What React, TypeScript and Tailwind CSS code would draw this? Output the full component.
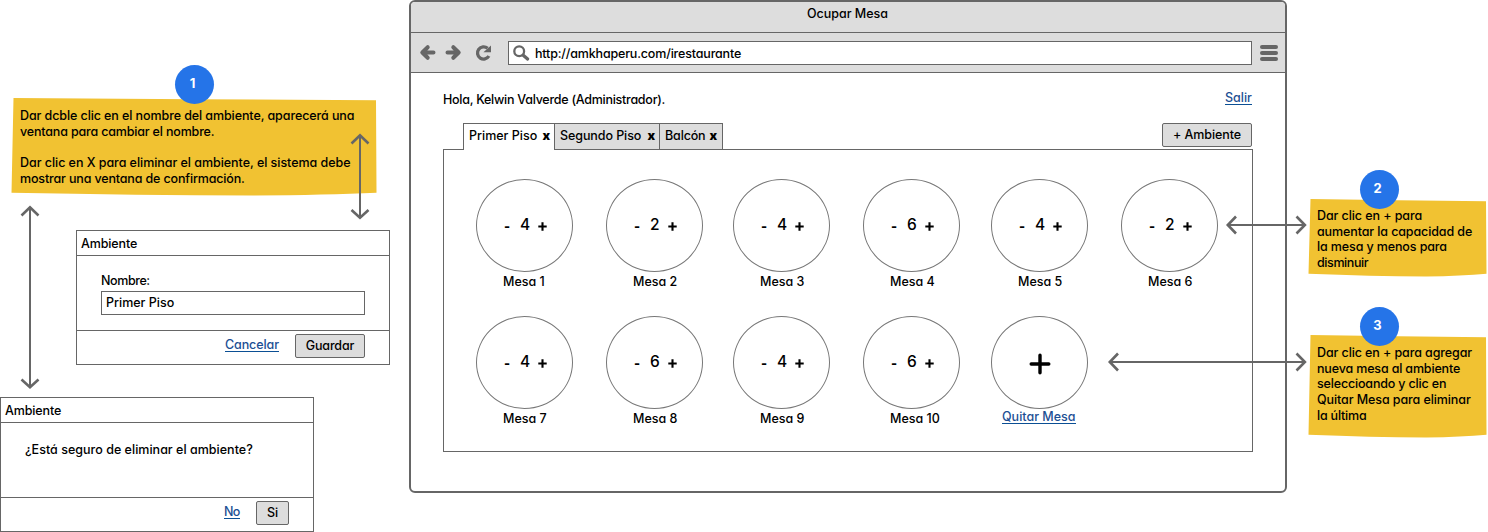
import type { ReactNode } from 'react';

type Table = { name: string; seats: number };

const tables: Table[] = [
  { name: 'Mesa 1', seats: 4 },
  { name: 'Mesa 2', seats: 2 },
  { name: 'Mesa 3', seats: 4 },
  { name: 'Mesa 4', seats: 6 },
  { name: 'Mesa 5', seats: 4 },
  { name: 'Mesa 6', seats: 2 },
  { name: 'Mesa 7', seats: 4 },
  { name: 'Mesa 8', seats: 6 },
  { name: 'Mesa 9', seats: 4 },
  { name: 'Mesa 10', seats: 6 },
];

function Link({ children, className }: { children: ReactNode; className: string }) {
  return (
    <a className={`block h-[15px] border-b border-[#0b4f94] leading-4 text-[#1c4f94] ${className}`}>{children}</a>
  );
}

function Button({ children, className }: { children: ReactNode; className: string }) {
  return (
    <button
      className={`flex h-6 justify-center rounded-[2px] border border-[#666] bg-[#ddd] pt-[3px] leading-4 ${className}`}
    >
      {children}
    </button>
  );
}

function Badge({ n, className }: { n: number; className: string }) {
  return (
    <div
      className={`absolute flex size-[39px] justify-center rounded-full bg-[#2574e8] pt-[10px] pr-1 text-[13px] font-bold leading-4 text-white ${className}`}
    >
      {n}
    </div>
  );
}

function Note({ w, h, className, children }: { w: number; h: number; className: string; children: ReactNode }) {
  return (
    <div className={`relative leading-[15.7px] ${className}`}>
      <svg className="absolute inset-0 size-full" viewBox={`0 0 ${w} ${h}`} preserveAspectRatio="none">
        <path
          d={`M2.5 0 L${w / 2} 1.2 L${w - 1} 2.3 L${w - 0.5} ${h - 3.3} Q${w * 0.86} ${h - 0.9} ${w * 0.66} ${h - 0.6} Q${w * 0.35} ${h - 0.8} 0.5 ${h - 3.3} Z`}
          fill="#f1c232"
        />
      </svg>
      {children}
    </div>
  );
}

function Dialog({ children, footer, className }: { children: ReactNode; footer: ReactNode; className: string }) {
  return (
    <div className={`flex h-[135px] w-[314px] flex-col border border-[#666] bg-white ${className}`}>
      <div className="h-[25px] border-b border-[#666] pt-[5px] pl-1 leading-4 tracking-[-0.12px]">Ambiente</div>
      <div className="h-[75px] border-b border-[#666] pl-6">{children}</div>
      <div className="flex justify-end gap-4 pt-[3px] pr-6">{footer}</div>
    </div>
  );
}

function Tab({ label, className }: { label: string; className: string }) {
  return (
    <div className={`flex border-t border-l border-[#666] pt-1 pl-[5px] leading-4 ${className}`}>
      <span>{label}</span>
      <span className="ml-auto font-black tracking-normal">x</span>
    </div>
  );
}

function Seat({ table }: { table: Table }) {
  return (
    <div className="h-[137px]">
      <div className="flex h-[93px] w-[97px] items-start rounded-[50%] border border-[#777] pt-[35px] pl-[27px] leading-5">
        <span className="mt-px w-4 text-[13px] font-extrabold">-</span>
        <span className="w-[17px] text-[15.5px]">{table.seats}</span>
        <svg className="mt-[7px] ml-px" width="9" height="9" viewBox="0 0 9 9" stroke="#000" strokeWidth="2.1">
          <path d="M4.5 0.3V8.7M0.3 4.5H8.7" />
        </svg>
      </div>
      <div className="mt-[2px] pl-[27px] leading-4">{table.name}</div>
    </div>
  );
}

function BrowserWindow() {
  return (
    <section className="flex h-[493px] w-[878px] flex-col overflow-hidden rounded-[6px] border-2 border-[#666] bg-white">
      <div className="flex h-[31px] justify-center border-b border-[#666] bg-[#ddd] pt-1 pr-px leading-4">
        Ocupar Mesa
      </div>
      <div className="flex h-10 items-center border-b border-[#666] bg-[#ddd] pl-2">
        <svg width="90" height="18" viewBox="0 0 90 18" fill="none" stroke="#666" strokeWidth="4" strokeLinecap="round" strokeLinejoin="round">
          <path d="M3.5 8.5H14.5M8.7 3.2L3.3 8.5L8.7 13.8" />
          <path d="M28.5 8.5H39.5M34.3 3.2L39.7 8.5L34.3 13.8" />
          <path d="M68.6 4.3A6.1 6.1 0 1 0 69.9 12" strokeWidth="3.3" strokeLinecap="butt" />
          <path d="M72 1.4V8.2H64.4Z" fill="#666" stroke="none" />
        </svg>
        <div className="-ml-px flex h-6 w-[744px] border border-[#666] bg-white">
          <svg className="mt-[3px] ml-1" width="17" height="17" viewBox="0 0 17 17" fill="none" stroke="#666">
            <circle cx="6.2" cy="6.2" r="4.9" strokeWidth="2.3" />
            <path d="M10.2 10.2L14.6 14" strokeWidth="3.3" strokeLinecap="round" />
          </svg>
          <span className="mt-1 ml-[5px] leading-4 tracking-[-0.17px]">http://amkhaperu.com/irestaurante</span>
        </div>
        <div className="mt-px ml-2 flex flex-col gap-[2px]">
          <i className="h-1 w-[18px] rounded-full bg-[#666]" />
          <i className="h-1 w-[18px] rounded-full bg-[#666]" />
          <i className="h-1 w-[18px] rounded-full bg-[#666]" />
        </div>
      </div>

      <div className="flex flex-col pr-8 pl-8">
        <div className="flex h-[50px] justify-between pt-[17px] pr-px">
          <span className="mt-[2px] leading-4 tracking-[-0.26px]">Hola, Kelwin Valverde (Administrador).</span>
          <Link className="w-[27px]">Salir</Link>
        </div>
        <div className="flex h-[26px] pr-px pl-5">
          <Tab label="Primer Piso" className="z-10 h-[27px] w-[91px] bg-white pr-1" />
          <Tab label="Segundo Piso" className="w-[105px] bg-[#ddd] pr-1 tracking-[-0.08px]" />
          <Tab label="Balcón" className="w-16 border-r bg-[#ddd] pr-[5px] tracking-[-0.15px]" />
          <Button className="ml-auto w-[90px] tracking-[-0.1px]">+ Ambiente</Button>
        </div>
        <div className="grid h-[303px] w-[810px] grid-cols-[130px_127px_130px_128px_130px_97px] content-start border border-[#666] pt-[29px] pl-8">
          {tables.map((t) => (
            <Seat key={t.name} table={t} />
          ))}
          <div>
            <div className="flex h-[93px] w-[97px] items-center justify-center rounded-[50%] border border-[#777] pt-[2px]">
              <svg width="22" height="22" viewBox="0 0 22 22" stroke="#000" strokeWidth="3.4" strokeLinecap="round">
                <path d="M11 2.2V19.8M2.2 11H19.8" />
              </svg>
            </div>
            <Link className="ml-[11px] w-[74px]">Quitar Mesa</Link>
          </div>
        </div>
      </div>
    </section>
  );
}

export default function App() {
  return (
    <main className="relative flex h-[532px] w-[1488px] overflow-hidden bg-white font-['Inter',sans-serif] text-[12.5px] font-medium whitespace-nowrap text-black [font-feature-settings:'cv11']">
      <div className="flex w-[409px] flex-none flex-col pt-[98px]">
        <Note w={366} h={98} className="ml-[11px] h-[98px] w-[366px] pt-[10px] pl-[9px]">
          <Badge n={1} className="-top-[33px] left-[164px]" />
          <p className="relative tracking-[-0.09px]">Dar dcble clic en el nombre del ambiente, aparecerá una</p>
          <p className="relative tracking-[-0.17px]">ventana para cambiar el nombre.</p>
          <p className="relative mt-[15.7px] tracking-[-0.04px]">Dar clic en X para eliminar el ambiente, el sistema debe</p>
          <p className="relative tracking-[-0.15px]">mostrar una ventana de confirmación.</p>
        </Note>

        <Dialog
          className="mt-[34px] ml-[76px]"
          footer={
            <>
              <Link className="mt-[3px] w-[54px] tracking-[-0.1px]">Cancelar</Link>
              <Button className="w-[70px] tracking-[-0.15px]">Guardar</Button>
            </>
          }
        >
          <div className="pt-[17px] leading-4 tracking-[-0.4px]">Nombre:</div>
          <div className="mt-[2px] h-6 w-[264px] border border-[#666] pt-[3px] pl-1 leading-4">Primer Piso</div>
        </Dialog>

        <Dialog
          className="mt-8"
          footer={
            <>
              <Link className="mt-[3px] w-4 tracking-[-0.6px]">No</Link>
              <Button className="w-[33px]">Si</Button>
            </>
          }
        >
          <div className="pt-[19px] leading-4 tracking-[0.02px]">¿Está seguro de eliminar el ambiente?</div>
        </Dialog>
      </div>

      <BrowserWindow />

      <div className="flex w-[201px] flex-none flex-col pt-[199px] pl-[21px]">
        <Note w={179} h={78} className="h-[78px] w-[179px] pt-[9px] pl-[9px]">
          <Badge n={2} className="-top-[29px] left-[52px]" />
          <p className="relative tracking-[-0.08px]">Dar clic en + para</p>
          <p className="relative tracking-[-0.11px]">aumentar la capacidad de</p>
          <p className="relative tracking-[-0.12px]">la mesa y menos para</p>
          <p className="relative tracking-[-0.4px]">disminuir</p>
        </Note>
        <Note w={179} h={103} className="mt-[58px] h-[103px] w-[179px] pt-[10px] pl-[9px]">
          <Badge n={3} className="-top-[28px] left-[52px]" />
          <p className="relative tracking-[-0.1px]">Dar clic en + para agregar</p>
          <p className="relative tracking-[-0.16px]">nueva mesa al ambiente</p>
          <p className="relative tracking-[-0.17px]">seleccioando y clic en</p>
          <p className="relative tracking-[-0.09px]">Quitar Mesa para eliminar</p>
          <p className="relative tracking-[-0.2px]">la última</p>
        </Note>
      </div>

      <svg className="pointer-events-none absolute inset-0 z-20" width="1488" height="532" fill="none" stroke="#666" strokeWidth="2">
        <path d="M30 208V387M360 136V217M1228 225H1305M1110 362H1305" />
        <g strokeWidth="2.6">
          <path d="M21.5 215.5L30 207.3L38.5 215.5M21.5 379.5L30 387.2L38.5 379.5" />
          <path d="M351.5 143.5L360 135.3L368.5 143.5M351.5 210L360 217.8L368.5 210" />
          <path d="M1236 216.5L1227.8 225L1236 233.5M1296.5 216.5L1304.9 225L1296.5 233.5" />
          <path d="M1118 353.5L1109.8 362L1118 370.5M1296.5 353.5L1304.9 362L1296.5 370.5" />
        </g>
      </svg>
    </main>
  );
}
